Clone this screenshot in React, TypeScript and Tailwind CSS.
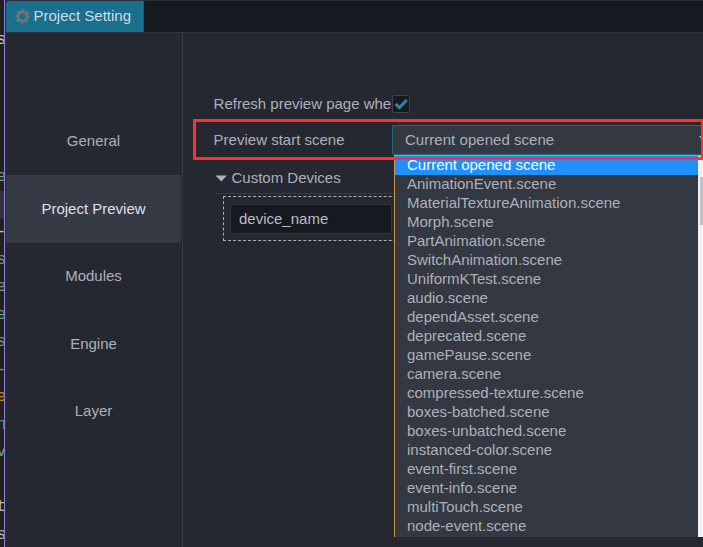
import React from 'react';

const scenes = [
  'AnimationEvent.scene',
  'MaterialTextureAnimation.scene',
  'Morph.scene',
  'PartAnimation.scene',
  'SwitchAnimation.scene',
  'UniformKTest.scene',
  'audio.scene',
  'dependAsset.scene',
  'deprecated.scene',
  'gamePause.scene',
  'camera.scene',
  'compressed-texture.scene',
  'boxes-batched.scene',
  'boxes-unbatched.scene',
  'instanced-color.scene',
  'event-first.scene',
  'event-info.scene',
  'multiTouch.scene',
  'node-event.scene',
];

const codeEdge: [string, string][] = [
  ['s', 'text-[#c9c4c0]'],
  ['', ''],
  ['', ''],
  ['', ''],
  ['', ''],
  ['e', 'text-[#6f9f7d]'],
  ['', 'bg-[#35343d]'],
  ['-', 'text-[#c5c0b8]'],
  ['s', 'text-[#6f9f7d]'],
  ['e', 'text-[#6f9f7d]'],
  ['e', 'text-[#6f9f7d]'],
  ['s', 'text-[#6f9f7d]'],
  ['-', 'text-[#6f9f7d]'],
  ['e', 'text-[#c08a10]'],
  ['n', 'text-[#5aa387]'],
  ['v', 'text-[#6fa37d]'],
  ['', ''],
  ['t', 'text-[#c0bfc0]'],
  ['s', 'text-[#b5b3b5]'],
];

const navItems = ['General', 'Project Preview', 'Modules', 'Engine', 'Layer'];

function Gear() {
  return (
    <svg className="h-[15px] w-[15px] shrink-0" viewBox="0 0 16 16" fill="none" stroke="#747576">
      <circle cx="8" cy="8" r="4.8" strokeWidth="2.8" />
      <circle cx="8" cy="8" r="6.6" strokeWidth="2.2" strokeDasharray="2.983 2.2" strokeDashoffset="1.491" />
    </svg>
  );
}

function Dropdown() {
  return (
    <div className="absolute top-[155px] left-[394px] flex h-[382px] w-[309px] border-t border-l border-[#c69a48] bg-[#343840]">
      <div className="flex w-[303px] flex-col">
        <div className="h-[19px] shrink-0 bg-[#1e90ff] pl-3 leading-[17px] text-white">Current opened scene</div>
        {scenes.map((name) => (
          <div key={name} className="h-[19px] shrink-0 pl-3 leading-[17px] text-[#acb1ba]">
            {name}
          </div>
        ))}
      </div>
      <div className="w-[5px] bg-[#f1f1f1] pt-[21px] pl-0.5">
        <div className="h-12 bg-[#c1c1c1]" />
      </div>
    </div>
  );
}

export default function App() {
  return (
    <div className="relative flex h-[547px] w-[703px] overflow-hidden bg-[#252830] font-['Liberation_Sans',Arial,sans-serif] text-[15px] text-[#acb0ba]">
      <div className="flex w-1 shrink-0 flex-col overflow-hidden bg-[#22211f] pt-[26px] font-['Liberation_Mono',monospace] text-[16px]">
        {codeEdge.map(([glyph, tone], i) => (
          <div key={i} className={`flex h-[27.5px] shrink-0 items-center justify-end ${tone}`}>
            <span className="-mr-[2px]">{glyph}</span>
          </div>
        ))}
      </div>
      <div className="w-px shrink-0 bg-[#8a7fd0]" />
      <div className="w-px shrink-0 bg-[#2c2d42]" />

      <div className="flex min-w-0 flex-1 flex-col">
        <header className="flex h-[33px] shrink-0 border-t border-b border-t-[#2b2e39] border-b-[#313542] bg-[#171920]">
          <div className="flex h-[31px] w-[138px] items-center rounded-tl-[3px] border-r border-[#2c5666] bg-[#196f8c] pl-[9px] text-[#d2d9e4]">
            <Gear />
            <span className="ml-[3.5px] whitespace-nowrap">Project Setting</span>
          </div>
        </header>

        <div className="flex min-h-0 flex-1">
          <nav className="flex w-[177px] shrink-0 flex-col border-r border-[#343846] pt-[74.5px] pr-px">
            {navItems.map((item) => (
              <div
                key={item}
                className={`flex h-[67.5px] items-center justify-center ${
                  item === 'Project Preview' ? 'bg-[#363a45] text-[#dde1eb]' : ''
                }`}
              >
                {item}
              </div>
            ))}
          </nav>

          <main className="flex min-w-0 flex-1 flex-col pt-[61px] pl-[31px]">
            <div className="flex h-5 items-center">
              <div className="-ml-[0.4px] w-[178.4px] overflow-hidden whitespace-nowrap">Refresh preview page whe</div>
              <div className="flex h-[18px] w-[18px] items-center justify-center rounded-[2px] border border-[#3d424c] bg-[#171920]">
                <svg className="h-3.5 w-3.5 shrink-0" viewBox="0 0 14 14" fill="none" stroke="#32819f" strokeWidth="3.2">
                  <path d="M1.6 7 L5.4 10.6 L12.8 3" />
                </svg>
              </div>
            </div>

            <div className="mt-[11px] flex h-[30px] items-center">
              <div className="-ml-[0.4px] w-[178.4px]">Preview start scene</div>
              <div className="flex h-[30px] flex-1 items-center justify-between overflow-hidden rounded-l-[2px] border border-r-0 border-[#1b6a84] bg-[#343840] pl-3">
                <span className="tracking-[0.04px]">Current opened scene</span>
                <svg className="-mr-[6px] h-[6px] w-[10px] -translate-y-px" viewBox="0 0 10 6">
                  <path d="M0 0 H10 L5 6 Z" fill="#acb0ba" />
                </svg>
              </div>
            </div>

            <div className="mt-[9px] ml-px flex h-[30px] items-center border-b border-[#373b47]">
              <svg className="h-[7px] w-3 shrink-0" viewBox="0 0 12 7">
                <path d="M0.5 0.5 H12 L6.25 6.5 Z" fill="#acb0ba" />
              </svg>
              <span className="ml-[4.5px]">Custom Devices</span>
            </div>

            <div className="mt-0.5 ml-[9px] flex h-[45px] items-center border border-r-0 border-dashed border-[#acb0ba] pl-1.5">
              <div className="flex h-[30px] w-[162px] items-center rounded-[3px] border border-[#303440] bg-[#171920] pt-0.5 pl-2 text-[#b8bdc8]">
                device_name
              </div>
            </div>
          </main>
        </div>
      </div>

      <Dropdown />
      <div className="absolute top-[119px] left-[193px] h-[41px] w-[510px] border-3 border-r-2 border-[#ff302f]" />
    </div>
  );
}
